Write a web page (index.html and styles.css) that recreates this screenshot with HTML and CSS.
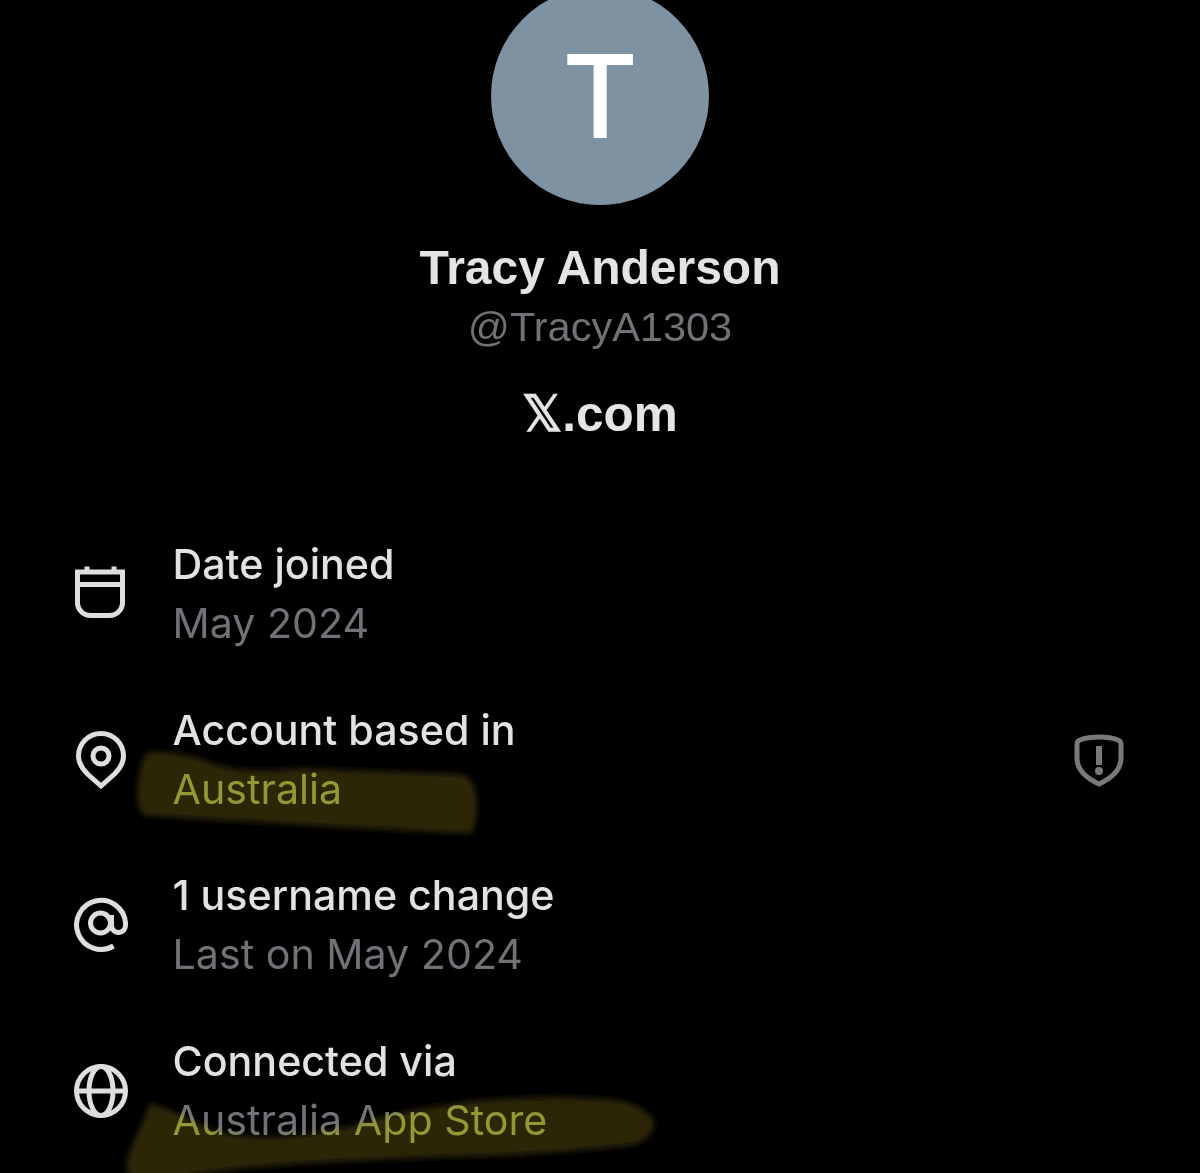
FILE: index.html
```html
<!DOCTYPE html>
<html lang="en">
<head>
  <meta charset="UTF-8">
  <meta name="viewport" content="width=device-width, initial-scale=1">
  <title>About this account</title>
  <link rel="stylesheet" href="styles.css">
</head>
<body>
  <!-- Profile header -->
  <header class="profile">
    <div class="avatar">T</div>
    <div class="profile-name">Tracy Anderson</div>
    <div class="profile-handle">@TracyA1303</div>
    <div class="profile-site">𝕏.com</div>
  </header>

  <!-- Account details -->
  <section class="details">
    <div class="row">
      <svg class="row-icon" viewBox="0 0 60 60" aria-hidden="true">
        <path d="M7.500 8h45v30a13 13 0 0 1-13 13.500h-19a13 13 0 0 1-13-13.500zM7.500 20.500h45M17 2.500V8M44 2.500V8"/>
      </svg>
      <div class="row-text">
        <div class="row-title">Date joined</div>
        <div class="row-sub">May 2024</div>
      </div>
    </div>

    <div class="row">
      <svg class="marker marker-under" viewBox="0 0 1200 1173" aria-hidden="true"><use href="#stroke-based"/></svg>
      <svg class="row-icon" viewBox="0 0 60 60" aria-hidden="true">
        <path d="M31 3.500a22.500 22.500 0 0 1 22.500 22.500c0 8-4 13-9 18L31 56 17.500 44c-5-5-9-10-9-18A22.500 22.500 0 0 1 31 3.500z"/>
        <circle cx="31" cy="26" r="8"/>
      </svg>
      <div class="row-text">
        <div class="row-title">Account based in</div>
        <div class="row-sub">Australia</div>
      </div>
      <svg class="row-badge" viewBox="0 0 60 60" aria-hidden="true">
        <path d="M29 7c7 0 14 1 19 3 2 .8 3 2 3 4v14c0 12-9 20-22 26C16 48 7 40 7 28V14c0-2 1-3.200 3-4 5-2 12-3 19-3z"/>
        <path class="badge-mark" d="M26 16h6v19h-6z"/>
        <circle class="badge-mark" cx="29" cy="41" r="4"/>
      </svg>
    </div>

    <div class="row">
      <svg class="row-icon" viewBox="0 0 60 60" aria-hidden="true">
        <path d="M43.500 51A24.500 24.500 0 1 1 55.500 28v2a7 7 0 0 1-14 1V20"/>
        <circle cx="30.500" cy="28" r="10"/>
      </svg>
      <div class="row-text">
        <div class="row-title">1 username change</div>
        <div class="row-sub">Last on May 2024</div>
      </div>
    </div>

    <div class="row">
      <svg class="marker marker-under" viewBox="0 0 1200 1173" aria-hidden="true"><use href="#stroke-via"/></svg>
      <svg class="row-icon" viewBox="0 0 60 60" aria-hidden="true">
        <circle cx="31" cy="30" r="24.500"/>
        <ellipse cx="31" cy="30" rx="12" ry="24.500"/>
        <path d="M6.500 30h49"/>
      </svg>
      <div class="row-text">
        <div class="row-title">Connected via</div>
        <div class="row-sub">Australia App Store</div>
      </div>
    </div>
  </section>

  <!-- Yellow marker strokes, tinting the text beneath them -->
  <svg class="marker marker-over" viewBox="0 0 1200 1173" aria-hidden="true">
    <defs>
      <filter id="soft"><feGaussianBlur stdDeviation="3"/></filter>
      <path id="stroke-based" filter="url(#soft)" d="M146 752Q180 750 210 762T300 768L462 774Q476 778 477 800T472 834L350 828 145 816Q136 812 137 790T146 752z"/>
      <path id="stroke-via" filter="url(#soft)" d="M150 1103Q170 1108 200 1124T290 1136Q330 1132 370 1120T480 1100Q560 1094 620 1100 652 1108 655 1125 650 1142 630 1146 570 1152 500 1156 400 1158 300 1164 220 1169 170 1180L128 1176Q124 1160 132 1145z"/>
    </defs>
    <use href="#stroke-based"/>
    <use href="#stroke-via"/>
  </svg>
</body>
</html>
```

FILE: styles.css
```css
* {
  margin: 0;
  padding: 0;
  box-sizing: border-box;
}

html, body {
  height: 100%;
  overflow: hidden;
  background: #000;
  font-family: Inter, "Liberation Sans", sans-serif;
}

body {
  position: relative;
}

/* === HEADER === */
.profile {
  display: flex;
  flex-direction: column;
  align-items: center;
  font-family: "Liberation Sans", Arial, sans-serif;
}

.avatar {
  width: 218px;
  height: 218px;
  margin-top: -13px;
  border-radius: 50%;
  background: #7f92a1;
  color: #fff;
  font-family: Inter, sans-serif;
  font-size: 116px;
  font-weight: 500;
  line-height: 218px;
  text-align: center;
}

.profile-name {
  margin-top: 32px;
  color: #e4e4e4;
  font-size: 48px;
  font-weight: 700;
  line-height: 62px;
}

.profile-handle {
  margin-top: -1px;
  color: #6f7276;
  font-size: 41.500px;
  line-height: 58px;
}

.profile-site {
  margin-top: 29px;
  color: #e4e4e4;
  font-size: 49.500px;
  font-weight: 700;
  line-height: 58px;
}

/* === DETAILS === */
.details {
  display: flex;
  flex-direction: column;
  gap: 47.500px;
  margin-top: 92px;
  padding: 0 70px;
}

.row {
  display: flex;
  align-items: center;
  gap: 42.500px;
  height: 118px;
}

.row-icon {
  flex: none;
  width: 60px;
  height: 60px;
  fill: none;
  stroke: #dedede;
  stroke-width: 5;
}

.row-text {
  position: relative;
  flex: 1;
}

.row-title {
  color: #e2e2e2;
  font-size: 41.200px;
  font-weight: 500;
  line-height: 59px;
}

.row-sub {
  color: #6f7378;
  font-size: 41.200px;
  line-height: 59px;
}

.row-badge {
  flex: none;
  width: 60px;
  height: 60px;
  fill: none;
  stroke: #77797c;
  stroke-width: 5;
}

.badge-mark {
  fill: #77797c;
  stroke: none;
}

/* === MARKER === */
.marker {
  position: absolute;
  top: 0;
  left: 0;
  width: 1200px;
  height: 1173px;
  pointer-events: none;
}

.marker-under {
  fill: #201f10;
}

.marker-over {
  fill: #a6ab38;
  mix-blend-mode: overlay;
}
```
